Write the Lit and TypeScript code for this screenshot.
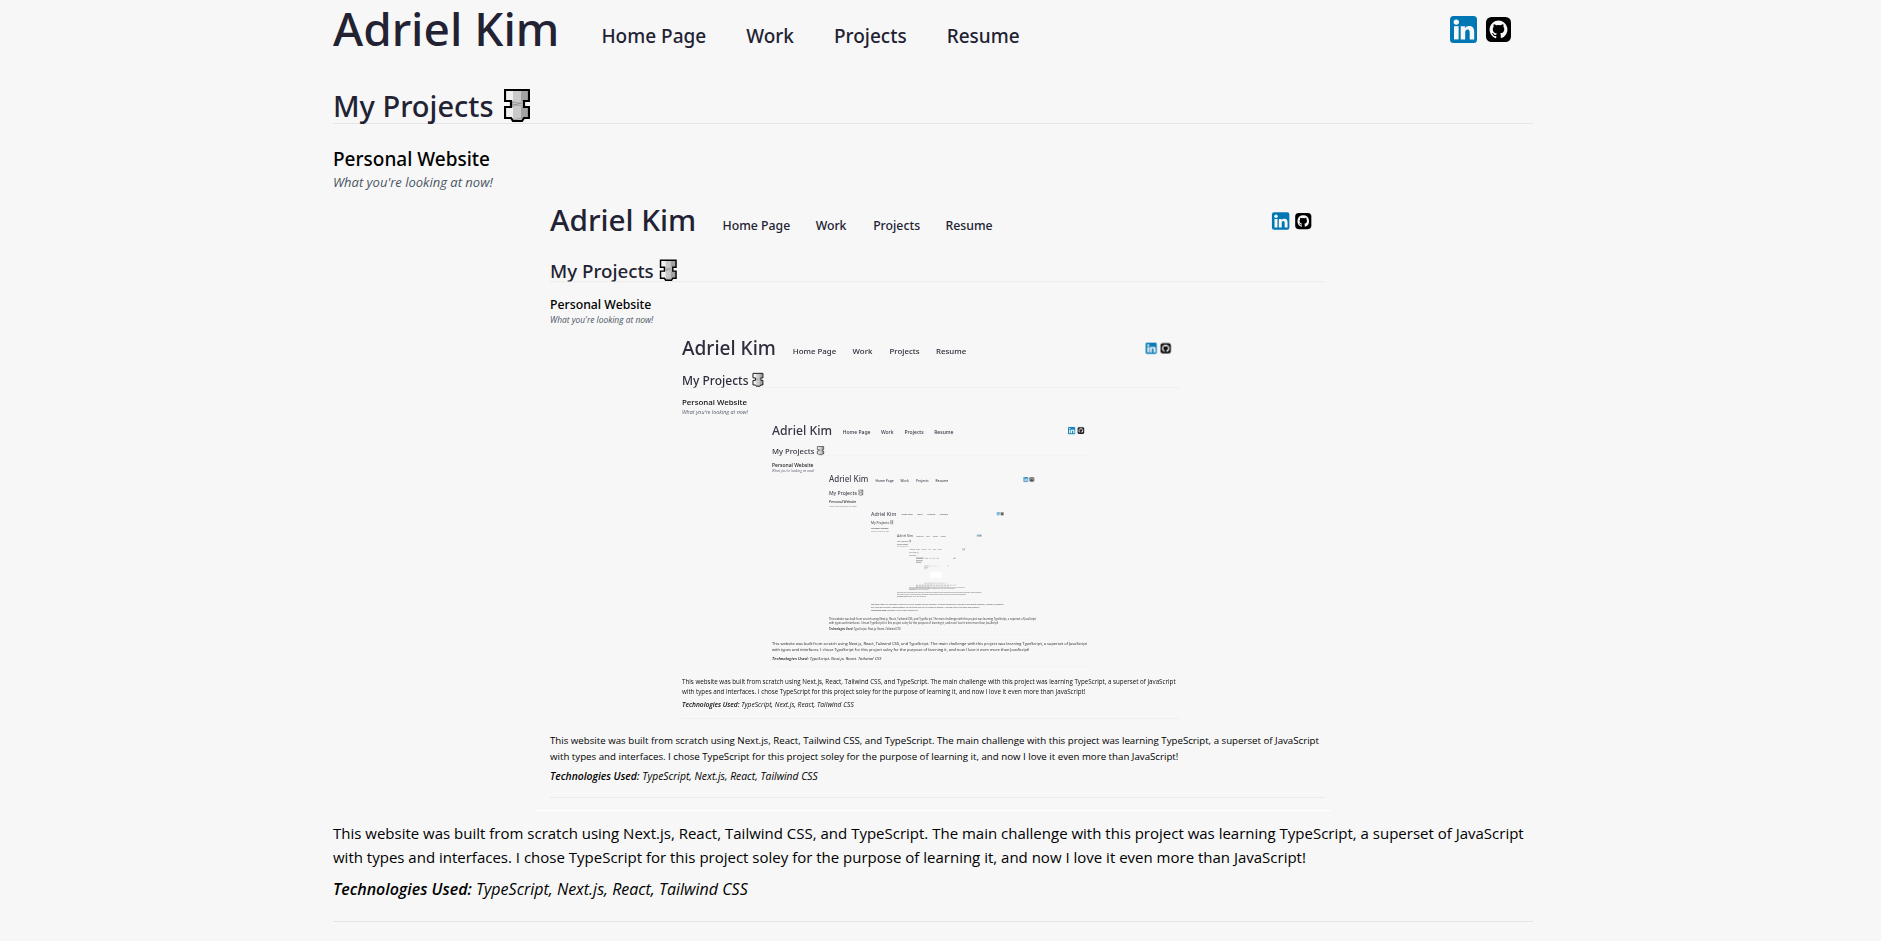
import { LitElement, html, svg, css } from "lit";
import { customElement } from "lit/decorators.js";

const NAME = "Adriel Kim";
const NAV = [
  { label: "Home Page", x: 267 },
  { label: "Work", x: 411 },
  { label: "Projects", x: 500 },
  { label: "Resume", x: 612 },
];
const TITLE = "Personal Website";
const TAGLINE = "What you're looking at now!";
const LINE_1 =
  "This website was built from scratch using Next.js, React, Tailwind CSS, and TypeScript. The main challenge with this project was learning TypeScript, a superset of JavaScript";
const LINE_2 =
  "with types and interfaces. I chose TypeScript for this project soley for the purpose of learning it, and now I love it even more than JavaScript!";
const TECH_LABEL = "Technologies Used:";
const TECH = "TypeScript, Next.js, React, Tailwind CSS";

type Level = { x: number; y: number; scale: number; opacity: number };

// Each level of the recursive page preview: origin, scale and ink on the canvas.
const LEVELS: Level[] = [
  { x: 17, y: 10, scale: 0.6463, opacity: 1 },
  { x: 149, y: 144, scale: 0.415, opacity: 0.95 },
  { x: 239, y: 230.7, scale: 0.265, opacity: 0.9 },
  { x: 296, y: 282.3, scale: 0.174, opacity: 0.85 },
  { x: 338, y: 318.5, scale: 0.1125, opacity: 0.8 },
  { x: 364, y: 341.5, scale: 0.0714, opacity: 0.7 },
  { x: 376, y: 355.8, scale: 0.0475, opacity: 0.6 },
];

// Below this size lettering is only a smudge, so these levels are drawn as strokes.
const FAR_LEVELS: Level[] = [
  { x: 383, y: 365.2, scale: 0.0335, opacity: 0.5 },
  { x: 391, y: 373.4, scale: 0.021, opacity: 0.4 },
];

const linkedinShape = svg`
  <rect width="27" height="27" rx="3.5" fill="#0077b5"></rect>
  <circle cx="6.3" cy="6.1" r="2.7" fill="#f7f7f7"></circle>
  <rect x="4" y="10.2" width="4.6" height="13.2" fill="#f7f7f7"></rect>
  <path d="M10.700 10.200h4.200v2c.8-1.400 2.300-2.300 4.300-2.300 3.900 0 5 2.500 5 6v7.500h-4.500v-6.700c0-1.700-.3-3.300-2.100-3.300s-2.400 1.400-2.400 3.200v6.800h-4.500z" fill="#f7f7f7"></path>`;

const githubShape = svg`
  <rect x="1" y="1" width="25" height="25" rx="5.500" fill="#000"></rect>
  <path fill="#f7f7f7" d="M13.500 4.600a9 9 0 0 0-2.850 17.540c.45.08.62-.2.620-.430v-1.700c-2.500.54-3.030-1.060-3.030-1.060-.41-1.040-1-1.320-1-1.320-.82-.56.06-.550.060-.550.9.060 1.380.930 1.380.930.8 1.380 2.110.98 2.620.75.080-.580.320-.980.570-1.200-2-.230-4.100-1-4.100-4.450 0-.98.350-1.790.930-2.420-.1-.230-.400-1.150.090-2.380 0 0 .760-.240 2.480.920a8.600 8.600 0 0 1 4.500 0c1.720-1.160 2.470-.92 2.470-.92.5 1.230.190 2.150.100 2.380.580.630.920 1.440.920 2.420 0 3.460-2.100 4.220-4.110 4.440.320.280.610.830.610 1.670v2.470c0 .24.160.520.620.430A9 9 0 0 0 13.500 4.600z"></path>`;

const boltShape = svg`
  <path d="M1 1h24v11h-5v6h5v11h-5l-2 3h-9l-2-3h-6v-11h6v-6h-6z" fill="#c9c9c9"></path>
  <path d="M1 1h8v11h-8zM1 18h8v11h-8z" fill="#f0f0f0"></path>
  <path d="M17 1h8v11h-8zM17 18h8v11h-8z" fill="#a2a2a2"></path>
  <path d="M8 13l11 2M8 15l11 2M19 12.500l-11 5M9 31l9-2" stroke="#8a8a8a" stroke-width=".7" fill="none"></path>
  <path d="M1 1h24v11h-5v6h5v11h-5l-2 3h-9l-2-3h-6v-11h6v-6h-6z" fill="none" stroke="#000" stroke-width="2.2"></path>`;

const level = (l: Level) => svg`
  <g opacity=${l.opacity} transform="translate(${l.x} ${l.y}) scale(${l.scale})">
    <text class="p-name" x="0" y="45">${NAME}</text>
    ${NAV.map((n) => svg`<text class="p-nav" x=${n.x} y="43">${n.label}</text>`)}
    <g transform="translate(1117 16)">${linkedinShape}</g>
    <g transform="translate(1152 16)">${githubShape}</g>
    <text class="p-section" x="0" y="117">My Projects</text>
    <g transform="translate(170 89)">${boltShape}</g>
    <rect x="0" y="123" width="1200" height="1" fill="#e5e5e7"></rect>
    <text class="p-title" x="0" y="166">${TITLE}</text>
    <text class="p-tag" x="0" y="187">${TAGLINE}</text>
    <text class="p-body" x="0" y="839">${LINE_1}</text>
    <text class="p-body" x="0" y="863">${LINE_2}</text>
    <text class="p-tech" x="0" y="895"><tspan class="p-strong">${TECH_LABEL}</tspan> ${TECH}</text>
    <rect x="0" y="921" width="1200" height="1" fill="#e5e5e7"></rect>
  </g>`;

const farLevel = (l: Level) => svg`
  <g class="far" opacity=${l.opacity} transform="translate(${l.x} ${l.y}) scale(${l.scale})">
    <path d="M0 28H224" stroke-width="30"></path>
    <path d="M267 36H371M411 36H460M500 36H572M612 36H683" stroke-width="14"></path>
    <path d="M1117 30H1178" stroke-width="26"></path>
    <path d="M0 106H196" stroke-width="24"></path>
    <path d="M0 160H155" stroke-width="18"></path>
    <path d="M0 834H1200M0 858H985M0 889H409" stroke-width="12" stroke-dasharray="60 24"></path>
  </g>`;

@customElement("page-preview")
export class PagePreview extends LitElement {
  static styles = css`
    :host {
      display: block;
    }
    .canvas {
      display: block;
      width: 100%;
      height: auto;
      font-family: "Open Sans", "Noto Sans", sans-serif;
    }
    .p-name,
    .p-nav,
    .p-section,
    .p-title {
      font-family: "Noto Sans", "Open Sans", sans-serif;
      font-weight: 500;
      fill: #222233;
    }
    .p-name {
      font-size: 46px;
    }
    .p-nav {
      font-size: 19px;
    }
    .p-section {
      font-size: 29px;
    }
    .p-title {
      font-size: 19px;
      fill: #000;
    }
    .p-tag {
      font-size: 13px;
      font-style: italic;
      fill: #4b5563;
    }
    .p-body {
      font-size: 15px;
      fill: #000;
    }
    .p-tech {
      font-size: 16px;
      font-style: italic;
      fill: #000;
    }
    .p-strong {
      font-weight: 600;
    }
    .far {
      fill: none;
      stroke: #222233;
    }
  `;

  render() {
    return html`
      <svg class="canvas" viewBox="0 0 800 619" role="img" aria-label="Preview of the personal website">
        ${LEVELS.map(level)} ${FAR_LEVELS.map(farLevel)}
        <rect x="397" y="380" width="12" height="6" fill="#fff"></rect>
        <rect x="2" y="618" width="796" height="1" fill="#fff"></rect>
      </svg>
    `;
  }
}

@customElement("app-root")
export class AppRoot extends LitElement {
  static styles = css`
    :host {
      display: block;
      min-height: 100vh;
      box-sizing: border-box;
      padding-right: 15px;
      background: #f7f7f7;
      color: #000;
      font-family: "Open Sans", "Noto Sans", sans-serif;
      font-size: 15px;
      line-height: 24px;
    }
    .page {
      max-width: 1200px;
      margin: 0 auto;
    }
    .header,
    .section,
    .title {
      font-family: "Noto Sans", "Open Sans", sans-serif;
      font-weight: 500;
    }
    .header {
      display: flex;
      align-items: flex-end;
      color: #222233;
    }
    .name {
      margin: 0;
      font-size: 46px;
      line-height: 56px;
      font-weight: 500;
    }
    .nav {
      display: flex;
      gap: 40px;
      padding: 0 0 6px 42px;
      font-size: 19px;
      line-height: 28px;
    }
    .link {
      color: inherit;
      text-decoration: none;
    }
    .social {
      display: flex;
      gap: 8px;
      margin-left: auto;
      padding: 0 21px 13px 0;
    }
    .icon {
      display: block;
      width: 27px;
      height: 27px;
    }
    .section {
      display: flex;
      align-items: flex-end;
      gap: 10px;
      margin: 33px 0 22px;
      border-bottom: 1px solid #e5e5e7;
      color: #222233;
      font-size: 29px;
      line-height: 34px;
    }
    .bolt {
      display: block;
      width: 26px;
      height: 34px;
    }
    .title {
      margin: 0;
      font-size: 19px;
      line-height: 26px;
    }
    .tag {
      margin: 0;
      color: #4b5563;
      font-size: 13px;
      line-height: 20px;
      font-style: italic;
    }
    .preview {
      width: 66.6667%;
      margin: 0 auto 10px;
    }
    .text {
      margin: 0 0 8px;
    }
    .tech {
      margin: 0;
      font-size: 16px;
      font-style: italic;
    }
    .strong {
      font-weight: 600;
    }
    .project {
      padding-bottom: 20px;
      border-bottom: 1px solid #e5e5e7;
    }
  `;

  render() {
    return html`
      <div class="page">
        <header class="header">
          <h1 class="name">${NAME}</h1>
          <nav class="nav">
            ${NAV.map((n) => html`<a class="link" href="#">${n.label}</a>`)}
          </nav>
          <div class="social">
            <a href="#" aria-label="LinkedIn">
              <svg class="icon" viewBox="0 0 27 27">${linkedinShape}</svg>
            </a>
            <a href="#" aria-label="GitHub">
              <svg class="icon" viewBox="0 0 27 27">${githubShape}</svg>
            </a>
          </div>
        </header>
        <main>
          <h2 class="section">
            My Projects
            <svg class="bolt" viewBox="0 0 26 34" aria-hidden="true">${boltShape}</svg>
          </h2>
          <article class="project">
            <h3 class="title">${TITLE}</h3>
            <p class="tag">${TAGLINE}</p>
            <page-preview class="preview"></page-preview>
            <p class="text">${LINE_1} ${LINE_2}</p>
            <p class="tech"><span class="strong">${TECH_LABEL}</span> ${TECH}</p>
          </article>
        </main>
      </div>
    `;
  }
}
